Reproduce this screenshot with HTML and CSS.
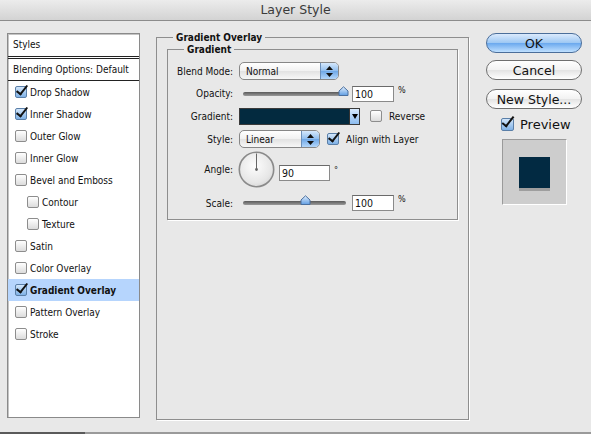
FILE: index.html
```html
<!DOCTYPE html>
<html lang="en">
<head>
  <meta charset="UTF-8">
  <title>Layer Style</title>
  <link rel="stylesheet" href="styles.css">
</head>
<body>
  <div class="titlebar">Layer Style</div>

  <div class="dialog">
    <div class="style-list">
      <div class="list-head">Styles</div>
      <div class="list-head blend">Blending Options: Default</div>
      <ul class="effects">
        <li><span class="check on"></span>Drop Shadow</li>
        <li><span class="check on"></span>Inner Shadow</li>
        <li><span class="check"></span>Outer Glow</li>
        <li><span class="check"></span>Inner Glow</li>
        <li><span class="check"></span>Bevel and Emboss</li>
        <li class="sub"><span class="check"></span>Contour</li>
        <li class="sub"><span class="check"></span>Texture</li>
        <li><span class="check"></span>Satin</li>
        <li><span class="check"></span>Color Overlay</li>
        <li class="selected"><span class="check on"></span>Gradient Overlay</li>
        <li><span class="check"></span>Pattern Overlay</li>
        <li><span class="check"></span>Stroke</li>
      </ul>
    </div>

    <fieldset class="panel">
      <legend>Gradient Overlay</legend>
      <fieldset class="group">
        <legend>Gradient</legend>
        <div class="form">
          <label class="row-blend">Blend Mode:</label>
          <div class="row-blend">
            <div class="select blend-select">
              <span>Normal</span>
              <span class="stepper">
                <svg width="7" height="11" viewBox="0 0 7 11"><path d="M3.5 0 7 4H0z M3.5 11 0 7h7z" fill="#111"/></svg>
              </span>
            </div>
          </div>

          <label class="row-opacity">Opacity:</label>
          <div class="row-opacity">
            <div class="slider">
              <svg class="thumb" style="left: 100px" width="11" height="10" viewBox="0 0 11 10">
                <path d="M1 9.5V5L5.5 0.8 10 5v4.5z" fill="url(#thumbFill)" stroke="#4a6f9e"/>
              </svg>
            </div>
            <span class="field num">100</span>
            <span class="unit">%</span>
          </div>

          <label class="row-gradient">Gradient:</label>
          <div class="row-gradient">
            <div class="swatch">
              <span class="swatch-arrow">
                <svg width="6" height="5" viewBox="0 0 6 5"><path d="M0 0h6L3 5z" fill="#000"/></svg>
              </span>
            </div>
            <span class="check reverse"></span>
            <span class="opt">Reverse</span>
          </div>

          <label class="row-style">Style:</label>
          <div class="row-style">
            <div class="select style-select">
              <span>Linear</span>
              <span class="stepper">
                <svg width="7" height="11" viewBox="0 0 7 11"><path d="M3.5 0 7 4H0z M3.5 11 0 7h7z" fill="#111"/></svg>
              </span>
            </div>
            <span class="check on align"></span>
            <span class="opt">Align with Layer</span>
          </div>

          <label class="row-angle">Angle:</label>
          <div class="row-angle">
            <svg class="dial" width="37" height="37" viewBox="0 0 37 37">
              <defs>
                <radialGradient id="dialFace" cx="0.45" cy="0.4" r="0.7">
                  <stop offset="0" stop-color="#fdfdfd"/>
                  <stop offset="0.7" stop-color="#e6e6e6"/>
                  <stop offset="1" stop-color="#cfcfcf"/>
                </radialGradient>
                <linearGradient id="thumbFill" x1="0" y1="0" x2="0" y2="1">
                  <stop offset="0" stop-color="#e2effd"/>
                  <stop offset="1" stop-color="#5f9de3"/>
                </linearGradient>
              </defs>
              <circle cx="18.5" cy="18.5" r="17.2" fill="url(#dialFace)" stroke="#8a8a8a" stroke-width="1.6"/>
              <line x1="18.5" y1="18.5" x2="18.5" y2="2.5" stroke="#666" stroke-width="1"/>
              <circle cx="18.5" cy="18.5" r="1.4" fill="#666"/>
            </svg>
            <span class="field angle-field">90</span>
            <span class="unit">°</span>
          </div>

          <label class="row-scale">Scale:</label>
          <div class="row-scale">
            <div class="slider">
              <svg class="thumb" style="left: 62px" width="11" height="10" viewBox="0 0 11 10">
                <path d="M1 9.5V5L5.5 0.8 10 5v4.5z" fill="url(#thumbFill)" stroke="#4a6f9e"/>
              </svg>
            </div>
            <span class="field num">100</span>
            <span class="unit">%</span>
          </div>
        </div>
      </fieldset>
    </fieldset>

    <div class="actions">
      <button class="btn default">OK</button>
      <button class="btn cancel">Cancel</button>
      <button class="btn newstyle">New Style...</button>
      <div class="preview-toggle">
        <span class="check on big"></span>
        <span>Preview</span>
      </div>
      <div class="preview">
        <div class="preview-square"></div>
      </div>
    </div>
  </div>

  <div class="bottom-line"><span></span></div>
</body>
</html>
```

FILE: styles.css
```css
body {
  margin: 0;
  width: 591px;
  height: 434px;
  overflow: hidden;
  background-color: #e8e8e8;
  font-family: 'DejaVu Sans Condensed', 'DejaVu Sans', sans-serif;
  font-stretch: condensed;
  font-size: 10px;
  color: #111;
}

/* window title */
.titlebar {
  height: 20px;
  line-height: 20px;
  text-align: center;
  font-family: 'DejaVu Sans', sans-serif;
  font-stretch: normal;
  font-size: 12.5px;
  color: #3a3a3a;
  background: linear-gradient(#ececec, #d3d3d3);
  border-bottom: 1px solid #8c8c8c;
}

.dialog {
  display: flex;
  align-items: flex-start;
  height: 401px;
  padding: 10px 0 0 7px;
}

/* left column: list of effects */
.style-list {
  width: 131px;
  height: 383px;
  margin-top: 2px;
  background: #fff;
  border: 1px solid #8a8a8a;
  box-shadow: inset 1px 1px 0 #c4c4c4;
}

.list-head {
  height: 22px;
  line-height: 22px;
  padding-left: 5px;
  white-space: nowrap;
  border-bottom: 3px double #222;
}

.list-head.blend {
  height: 21px;
  line-height: 21px;
  border-bottom: 1px solid #222;
}

.effects {
  list-style: none;
  margin: 0;
  padding: 0;
}

.effects li {
  display: flex;
  align-items: center;
  height: 22px;
  padding-left: 7px;
  white-space: nowrap;
}

.effects li.sub {
  padding-left: 19px;
}

.effects li.selected {
  background: #b6d5fd;
  font-weight: bold;
}

.effects .check {
  margin-right: 3px;
}

/* aqua style checkboxes */
.check {
  position: relative;
  display: inline-block;
  flex: none;
  width: 10px;
  height: 10px;
  border: 1px solid #8d8d8d;
  border-radius: 2px;
  background: linear-gradient(#ffffff, #dcdcdc);
}

.check.on {
  border-color: #5a7fa8;
  background: linear-gradient(#d2e6fb, #7fb1e6);
}

.check.on::after {
  content: "";
  position: absolute;
  left: 3px;
  top: -4px;
  width: 4px;
  height: 10px;
  border-right: 2.5px solid #111;
  border-bottom: 2.5px solid #111;
  transform: rotate(38deg);
}

.check.big {
  width: 11px;
  height: 11px;
}

.check.big::after {
  left: 3px;
  top: -5px;
  height: 11px;
}

/* middle column */
.panel {
  box-sizing: border-box;
  width: 313px;
  height: 389px;
  margin: 0 0 0 16px;
  padding: 0 10px;
  border: 1px solid #8e8e8e;
  box-shadow: 1px 1px 0 #fff;
  min-width: 0;
}

.panel legend,
.group legend {
  margin-left: 6px;
  padding: 0 3px;
  line-height: 13px;
  font-weight: bold;
}

.group {
  box-sizing: border-box;
  height: 177px;
  margin: -1px 0 0;
  padding: 4px 10px 0;
  border: 1px solid #8e8e8e;
  box-shadow: 1px 1px 0 #fff;
  min-width: 0;
}

.form {
  display: grid;
  grid-template-columns: 55px 1fr;
  grid-template-rows: 22px 23px 22px 24px 36px 28px;
  column-gap: 6px;
}

.form label {
  display: flex;
  align-items: center;
  justify-content: flex-end;
  white-space: nowrap;
}

.form > div {
  display: flex;
  align-items: center;
}

.form .row-scale {
  box-sizing: border-box;
  padding-top: 4px;
}

/* popup menus */
.select {
  box-sizing: border-box;
  display: flex;
  align-items: center;
  justify-content: space-between;
  height: 18px;
  padding-left: 6px;
  border: 1px solid #878787;
  border-radius: 5px;
  background: linear-gradient(#ffffff, #f1f1f1 50%, #e2e2e2 51%, #f7f7f7);
  overflow: hidden;
}

.blend-select {
  width: 100px;
}

.style-select {
  width: 81px;
}

.stepper {
  display: flex;
  align-items: center;
  justify-content: center;
  width: 17px;
  height: 100%;
  border-left: 1px solid #6c8fb9;
  background: linear-gradient(#d5e8fc, #8fbdee 50%, #6ea7e6 51%, #b3d6fa);
}

/* sliders */
.slider {
  position: relative;
  width: 103px;
  height: 4px;
  margin: 0 6px 0 4px;
  border-radius: 2px;
  background: linear-gradient(#5a5a5a, #9a9a9a);
}

.thumb {
  position: absolute;
  top: -6px;
  margin-left: -5px;
}

.field {
  box-sizing: border-box;
  display: inline-block;
  height: 16px;
  line-height: 14px;
  padding-left: 2px;
  background: #fff;
  border: 1px solid #8a8a8a;
  border-top-color: #6a6a6a;
  font-size: 10.5px;
}

.field.num {
  width: 42px;
}

.angle-field {
  width: 51px;
  margin: 7px 0 0 4px;
}

.unit {
  align-self: flex-start;
  margin: 3px 0 0 4px;
  font-size: 9px;
}

.row-angle .unit {
  margin-top: 14px;
}

/* gradient picker */
.swatch {
  box-sizing: border-box;
  display: flex;
  justify-content: flex-end;
  width: 121px;
  height: 17px;
  border: 1px solid #3a3a3a;
  background: #032a3f;
}

.swatch-arrow {
  display: flex;
  align-items: center;
  justify-content: center;
  width: 9px;
  background: linear-gradient(#d8eafd, #8cbcef);
  border-left: 1px solid #333;
}

.reverse {
  margin: 0 7px 0 10px;
}

.align {
  margin: 0 7px 0 7px;
}

.opt {
  white-space: nowrap;
}

.dial {
  margin-left: -1px;
}

/* right column */
.actions {
  display: flex;
  flex-direction: column;
  width: 96px;
  margin: 2px 0 0 17px;
}

.btn {
  height: 20px;
  padding: 0;
  border: 1px solid #6f6f6f;
  border-radius: 10px;
  font-family: 'DejaVu Sans', sans-serif;
  font-size: 12.5px;
  color: #111;
  background: linear-gradient(#ffffff, #f2f2f2 50%, #e3e3e3 51%, #ffffff);
}

.btn.default {
  border-color: #4b6e9a;
  background: linear-gradient(#dbeafc, #9cc7f3 50%, #6aa8ee 51%, #bfe0ff);
}

.btn.cancel {
  margin-top: 7px;
}

.btn.newstyle {
  margin-top: 9px;
}

.preview-toggle {
  display: flex;
  align-items: center;
  height: 14px;
  margin: 8px 0 0 15px;
  font-family: 'DejaVu Sans', sans-serif;
  font-stretch: normal;
  font-size: 13px;
}

.preview-toggle .check {
  margin-right: 6px;
}

.preview {
  box-sizing: border-box;
  display: flex;
  align-items: center;
  justify-content: center;
  width: 65px;
  height: 66px;
  margin: 8px 0 0 16px;
  background: #cdcdcd;
  border: 1px solid #fff;
  border-top-color: #9a9a9a;
  border-left-color: #9a9a9a;
}

.preview-square {
  width: 31px;
  height: 31px;
  background: #022a42;
  box-shadow: 0 3px 0 #9e9e9e;
}

.bottom-line {
  height: 2px;
  background: #9a9a9a;
}

.bottom-line span {
  display: block;
  width: 85px;
  height: 2px;
  background: #5a5a5a;
}
```
